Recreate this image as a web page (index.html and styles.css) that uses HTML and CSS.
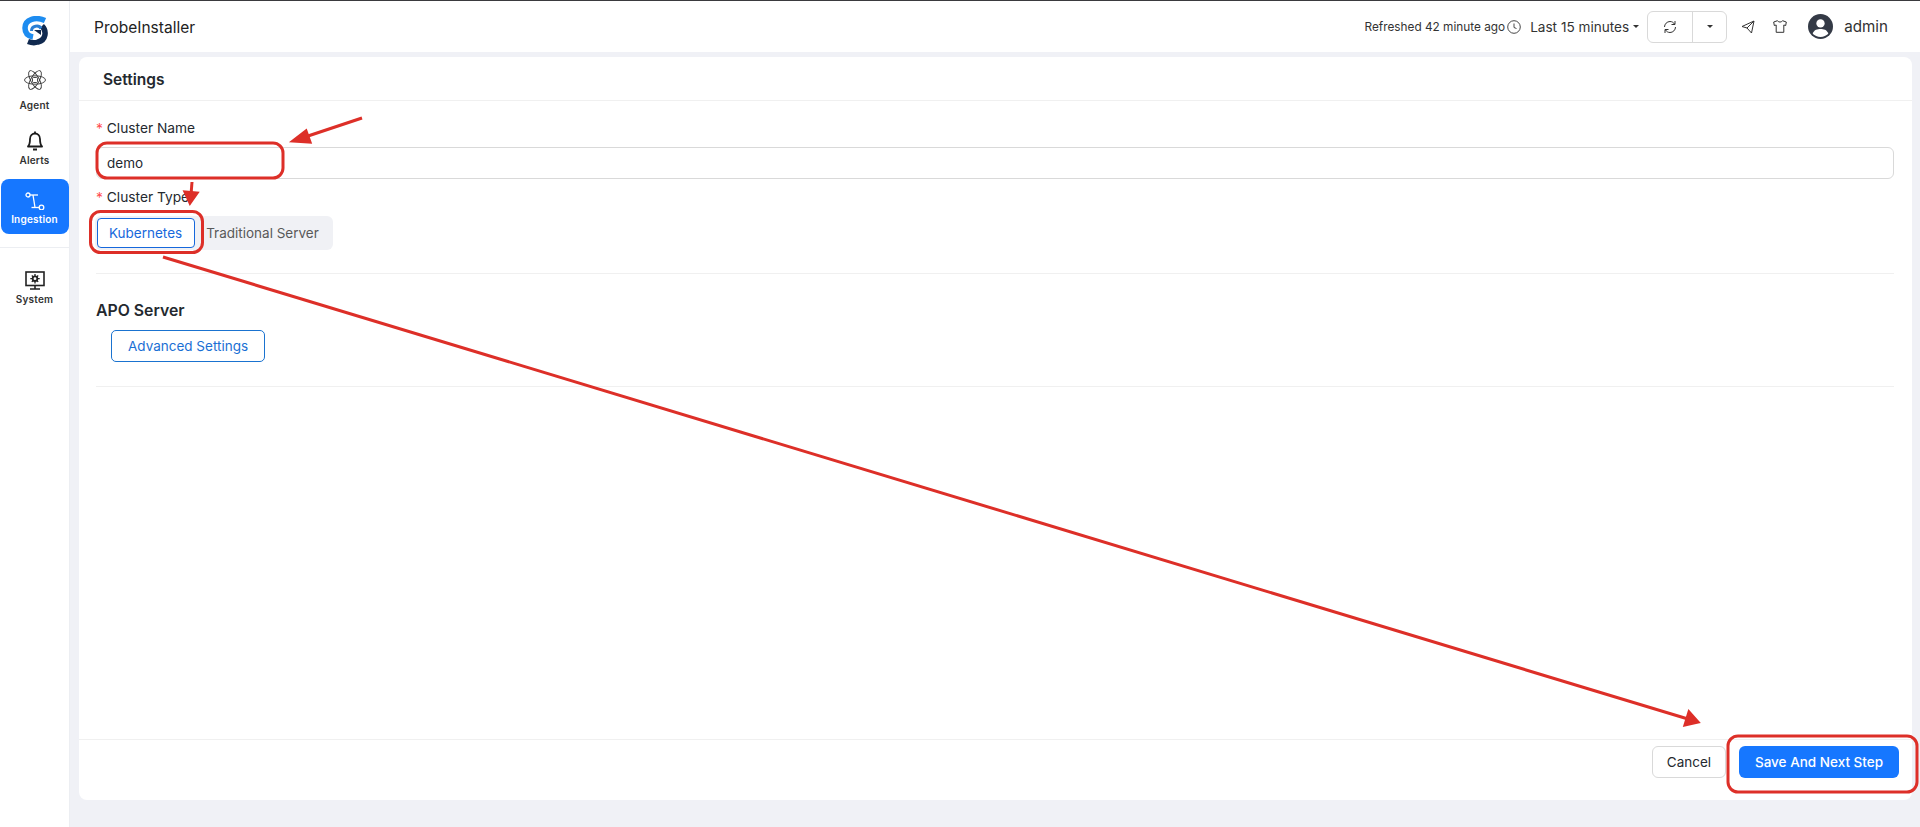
FILE: index.html
```html
<!DOCTYPE html>
<html lang="en">

<head>
    <meta charset="UTF-8">
    <meta name="viewport" content="width=device-width, initial-scale=1.0">
    <title>ProbeInstaller</title>
    <link rel="stylesheet" href="styles.css">
</head>

<body>
    <div id="app">
        <nav class="sidebar">
            <div class="logo">
                <svg width="26" height="30" viewBox="0 0 26 30" fill="none" stroke-width="5.500">
                    <path d="M20 10 C25 15 24 24 16 26 C13 27 10 27 6 25.500" stroke="#10294f"/>
                    <path d="M23 4.500 C14 0.500 3 3 3 12 C3 17 6 20 11 21" stroke="#1d8cf0"/>
                    <path d="M9.500 15 C9.500 9.500 17 8.500 19 12.500" stroke="#2b7fd4" stroke-width="3"/>
                    <path d="M12 14 L19 14 L19 19 Z" fill="#10294f" stroke="none"/>
                </svg>
            </div>
            <a class="nav-item">
                <svg class="agent-icon" width="22" height="22" viewBox="0 0 22 22" fill="none" stroke="#333" stroke-width="0.900">
                    <ellipse cx="11" cy="11" rx="10.500" ry="4.200"/>
                    <ellipse cx="11" cy="11" rx="10.500" ry="4.200" transform="rotate(60 11 11)"/>
                    <ellipse cx="11" cy="11" rx="10.500" ry="4.200" transform="rotate(120 11 11)"/>
                    <rect x="8.500" y="8.500" width="5" height="5" rx="1"/>
                </svg>
                <span>Agent</span>
            </a>
            <a class="nav-item">
                <svg width="16" height="20" viewBox="0 0 16 20" fill="none" stroke="#1c1c1c" stroke-width="1.800">
                    <path d="M1 15.500 C3 13.500 3 11 3 8 C3 4.500 5.500 2.500 8 2.500 C10.500 2.500 13 4.500 13 8 C13 11 13 13.500 15 15.500 Z" stroke-linejoin="round"/>
                    <path d="M6 18.500 H10" stroke-width="2"/>
                    <path d="M8 0.500 V2.500"/>
                </svg>
                <span>Alerts</span>
            </a>
            <a class="nav-item active">
                <svg width="20" height="18" viewBox="0 0 20 18" fill="none" stroke="#fff" stroke-width="1.300">
                    <circle cx="3" cy="3" r="2"/>
                    <path d="M5 3 H13"/>
                    <path d="M8 3 L10 15.500"/>
                    <path d="M6.500 15.500 H14"/>
                    <circle cx="16.500" cy="15.500" r="2.300"/>
                </svg>
                <span>Ingestion</span>
            </a>
            <div class="nav-divider"></div>
            <a class="nav-item">
                <svg width="20" height="19" viewBox="0 0 20 19" fill="none" stroke="#222" stroke-width="1.600">
                    <rect x="1" y="1" width="18" height="13.500"/>
                    <path d="M5 18 H15 M10 14.500 V18"/>
                    <circle cx="10" cy="7.700" r="2.300" stroke-width="1.800"/>
                    <path d="M10 3 V5 M10 10.500 V12.500 M5.300 7.700 H7.300 M12.700 7.700 H14.700 M6.800 4.500 L8.200 5.900 M13.200 4.500 L11.800 5.900 M6.800 10.900 L8.200 9.500 M13.200 10.900 L11.800 9.500" stroke-width="1.300"/>
                </svg>
                <span>System</span>
            </a>
        </nav>

        <div class="main">
            <header class="topbar">
                <div class="page-title">ProbeInstaller</div>
                <div class="topbar-right">
                    <span class="refreshed">Refreshed 42 minute ago</span>
                    <svg class="clock" width="14" height="14" viewBox="0 0 14 14" fill="none" stroke="#333" stroke-width="0.900">
                        <circle cx="7" cy="7" r="6.300"/>
                        <path d="M7 3.500 V7.500 L9.500 8.500"/>
                    </svg>
                    <span class="time-range">Last 15 minutes</span>
                    <span class="caret"></span>
                    <div class="refresh-group">
                        <div class="refresh-btn">
                            <svg width="14" height="14" viewBox="0 0 14 14" fill="none" stroke="#333" stroke-width="1">
                                <path d="M1.500 7 C1.500 4 4 1.500 7 1.500 C9 1.500 10.500 2.500 11.500 4 M12.500 7 C12.500 10 10 12.500 7 12.500 C5 12.500 3.500 11.500 2.500 10"/>
                                <path d="M12 1 V4.500 H8.500 M2 13 V9.500 H5.500"/>
                            </svg>
                        </div>
                        <div class="refresh-drop"><span class="caret"></span></div>
                    </div>
                    <svg class="send-icon" width="14" height="14" viewBox="0 0 14 14" fill="none" stroke="#333" stroke-width="1" stroke-linejoin="round">
                        <path d="M13 1 L1 6.500 L6 8 L10.500 13 Z M6 8 L13 1"/>
                    </svg>
                    <svg class="shirt-icon" width="14" height="13" viewBox="0 0 14 13" fill="none" stroke="#333" stroke-width="1" stroke-linejoin="round">
                        <path d="M4.500 0.700 L0.700 2 L1.300 5.500 L3.200 5 V12.300 H10.800 V5 L12.700 5.500 L13.300 2 L9.500 0.700 C9 2.500 5 2.500 4.500 0.700 Z"/>
                    </svg>
                    <svg class="avatar" width="25" height="25" viewBox="0 0 24 24">
                        <circle cx="12" cy="12" r="12" fill="#343a46"/>
                        <circle cx="12" cy="9" r="4" fill="#fff"/>
                        <path d="M4.500 19 C6 15 9 14.500 12 14.500 C15 14.500 18 15 19.500 19 C17.500 21 15 22 12 22 C9 22 6.500 21 4.500 19 Z" fill="#fff"/>
                    </svg>
                    <span class="username">admin</span>
                </div>
            </header>

            <div class="content">
                <section class="card">
                    <div class="card-head">Settings</div>
                    <div class="card-body">
                        <form class="form-block">
                            <label class="field-label"><i>*</i> Cluster Name</label>
                            <div class="text-input">demo</div>
                            <label class="field-label type-label"><i>*</i> Cluster Type</label>
                            <div class="segmented">
                                <div class="segment selected">Kubernetes</div>
                                <div class="segment">Traditional Server</div>
                            </div>
                        </form>
                        <div class="server-block">
                            <h3>APO Server</h3>
                            <div class="outline-btn">Advanced Settings</div>
                        </div>
                    </div>
                    <div class="card-foot">
                        <div class="btn cancel">Cancel</div>
                        <div class="btn primary">Save And Next Step</div>
                    </div>
                </section>
            </div>
        </div>
    </div>

    <!-- red annotations drawn over the screenshot -->
    <svg class="annotations" width="1920" height="827" viewBox="0 0 1920 827" fill="none" stroke="#dd2f28" stroke-width="3">
        <rect x="97" y="143" width="186" height="35" rx="10"/>
        <rect x="90.500" y="211.500" width="112" height="41" rx="10"/>
        <rect x="1728" y="736" width="189" height="56" rx="10"/>
        <path d="M362 118 L302 138"/>
        <path d="M293 141 L306 131 L310 142 Z" fill="#dd2f28"/>
        <path d="M192 182 L191 195"/>
        <path d="M190 203 L185 192 L197 193 Z" fill="#dd2f28"/>
        <path d="M163 257 L1688 719"/>
        <path d="M1698 722 L1685 725 L1689 712 Z" fill="#dd2f28"/>
    </svg>
</body>

</html>
```

FILE: styles.css
```css
* {
    box-sizing: border-box;
}

body {
    margin: 0;
    font-family: Inter, "Noto Sans", sans-serif;
    color: #24292f;
    background-color: #f0f1f6;
    overflow: hidden;
}

#app {
    display: flex;
    width: 1920px;
    height: 827px;
    border-top: 1px solid #3a3a3e;
}

.sidebar {
    width: 70px;
    flex-shrink: 0;
    background-color: #fff;
    border-right: 1px solid #eceef2;
    display: flex;
    flex-direction: column;
    align-items: center;
}

.logo {
    height: 64px;
    padding-top: 15px;
}

.nav-item {
    width: 68px;
    height: 55px;
    padding-bottom: 9px;
    display: flex;
    flex-direction: column;
    align-items: center;
    justify-content: flex-end;
    gap: 3px;
    font-size: 10px;
    line-height: 12px;
    font-weight: 600;
    letter-spacing: 0.2px;
    color: #333;
    border-radius: 8px;
}

.agent-icon {
    margin-bottom: 5px;
}

.nav-item.active {
    margin-top: 4px;
    background-color: #1677ff;
    color: #fff;
}

.nav-divider {
    width: 69px;
    height: 1px;
    margin: 13px 0 11px;
    background-color: #eceef2;
}

.main {
    flex: 1;
    display: flex;
    flex-direction: column;
}

.topbar {
    height: 51px;
    padding: 0 32px 0 24px;
    background-color: #fff;
    display: flex;
    align-items: center;
    justify-content: space-between;
}

.page-title {
    margin-top: 2px;
    font-size: 15.5px;
    color: #222;
}

.topbar-right {
    display: flex;
    align-items: center;
    font-size: 11.8px;
    color: #333;
}

.refreshed {
    margin-right: 2px;
}

.clock {
    margin-right: 9px;
}

.time-range {
    font-size: 13.6px;
    margin-right: 4px;
}

.caret {
    width: 0;
    height: 0;
    border-left: 3px solid transparent;
    border-right: 3px solid transparent;
    border-top: 3px solid #333;
}

.refresh-group {
    display: flex;
    width: 80px;
    height: 32px;
    margin: 0 14px 0 8px;
    border: 1px solid #d9d9d9;
    border-radius: 6px;
}

.refresh-btn {
    width: 45px;
    display: flex;
    align-items: center;
    justify-content: center;
    border-right: 1px solid #d9d9d9;
}

.refresh-drop {
    flex: 1;
    display: flex;
    align-items: center;
    justify-content: center;
}

.send-icon {
    margin-right: 18px;
}

.shirt-icon {
    margin-right: 21px;
}

.avatar {
    margin-right: 11px;
}

.username {
    font-size: 15.2px;
}

.content {
    flex: 1;
    padding: 5px 8px 27px 9px;
}

.card {
    height: 100%;
    display: flex;
    flex-direction: column;
    background-color: #fff;
    border-radius: 8px;
}

.card-head {
    height: 44px;
    padding: 1px 24px 0;
    display: flex;
    align-items: center;
    font-size: 15.5px;
    font-weight: 600;
    border-bottom: 1px solid #f0f0f0;
}

.card-body {
    flex: 1;
    padding: 0 18px 0 17px;
}

.form-block {
    padding-top: 18px;
    height: 173px;
    border-bottom: 1px solid #f0f0f0;
}

.field-label {
    display: block;
    font-size: 13.75px;
    line-height: 18px;
    margin-bottom: 10px;
}

.field-label i {
    font-style: normal;
    color: #ff4d4f;
}

.text-input {
    height: 32px;
    padding: 0 10px;
    display: flex;
    align-items: center;
    font-size: 13.5px;
    border: 1px solid #d9d9d9;
    border-radius: 6px;
}

.type-label {
    margin-top: 9px;
    margin-bottom: 10px;
}

.segmented {
    display: inline-flex;
    margin-left: -1px;
    padding: 2px;
    background-color: #f0f1f5;
    border-radius: 6px;
}

.segment {
    height: 30px;
    padding: 0 12px 0 11px;
    display: flex;
    align-items: center;
    font-size: 13.5px;
    color: #595959;
}

.segment.selected {
    color: #1668dc;
    background-color: #fff;
    border: 1px solid #1668dc;
    border-radius: 4px;
    padding: 0 12px 0 11px;
}

.server-block {
    height: 113px;
    padding-top: 27px;
    border-bottom: 1px solid #f0f0f0;
}

.server-block h3 {
    margin: 0 0 9px;
    font-size: 15.8px;
    line-height: 20px;
    font-weight: 600;
}

.outline-btn {
    display: inline-flex;
    align-items: center;
    height: 32px;
    margin-left: 15px;
    padding: 0 16px;
    font-size: 13.5px;
    color: #1a6fd4;
    border: 1px solid #1a73d0;
    border-radius: 5px;
}

.card-foot {
    height: 61px;
    padding: 6px 13px 0 0;
    display: flex;
    align-items: flex-start;
    justify-content: flex-end;
    gap: 13px;
    border-top: 1px solid #f0f0f0;
}

.btn {
    height: 32px;
    display: flex;
    align-items: center;
    justify-content: center;
    font-size: 13.5px;
    border-radius: 6px;
}

.btn.cancel {
    width: 74px;
    border: 1px solid #d9d9d9;
}

.btn.primary {
    width: 160px;
    color: #fff;
    font-weight: 500;
    background-color: #1677ff;
}

.annotations {
    position: absolute;
    top: 0;
    left: 0;
    pointer-events: none;
}
```
